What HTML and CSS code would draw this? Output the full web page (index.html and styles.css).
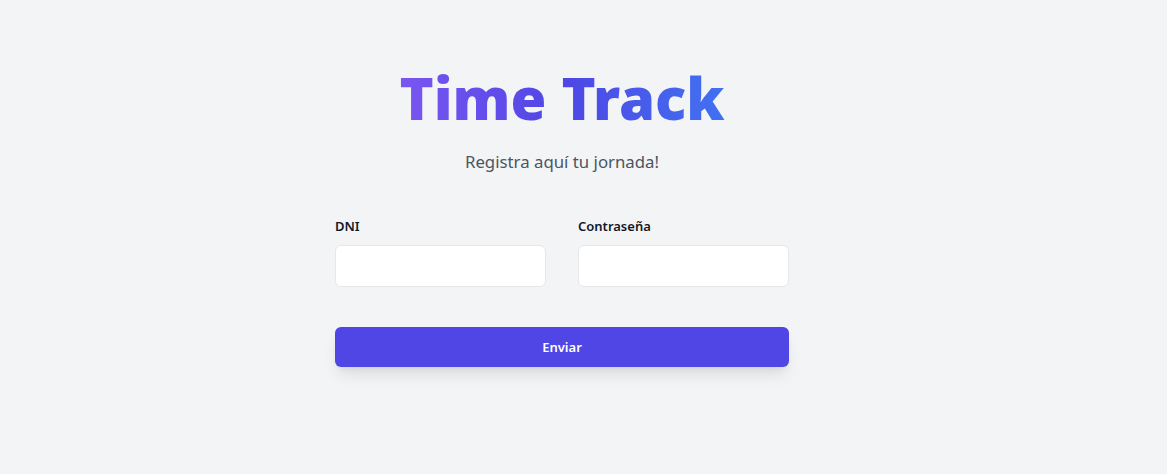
FILE: index.html
```html
<!DOCTYPE html>
<html lang="es">
<head>
<meta charset="utf-8">
<title>Time Track</title>
<link rel="stylesheet" href="styles.css">
</head>
<body>
<main class="page">
  <div class="card">
    <h1 class="title">Time Track</h1>
    <p class="subtitle">Registra aquí tu jornada!</p>
    <form class="form">
      <div class="fields">
        <div class="field">
          <label class="label" for="dni">DNI</label>
          <input class="input" id="dni" type="text">
        </div>
        <div class="field">
          <label class="label" for="pw">Contraseña</label>
          <input class="input" id="pw" type="password">
        </div>
      </div>
      <button class="button" type="button">Enviar</button>
    </form>
  </div>
</main>
</body>
</html>
```
FILE: styles.css
```css
html, body {
  margin: 0;
  padding: 0;
  background: #f3f4f6;
  font-family: "Noto Sans", "Open Sans", sans-serif;
}
.page {
  display: flex;
  justify-content: center;
  padding: 56px 43px 0 0;
  min-height: 474px;
  box-sizing: border-box;
}
.card {
  width: 454px;
  display: flex;
  flex-direction: column;
  align-items: stretch;
}
.title {
  margin: 0;
  text-align: center;
  font-size: 58px;
  line-height: 84px;
  font-weight: 900;
  background: linear-gradient(90deg, #8b5cf6 0%, #4f46e5 50%, #3b82f6 100%);
  -webkit-background-clip: text;
  background-clip: text;
  color: transparent;
}
.subtitle {
  margin: 8px 0 0;
  text-align: center;
  font-size: 16.8px;
  line-height: 28px;
  color: #4b5563;
}
.form {
  margin-top: 40px;
  display: flex;
  flex-direction: column;
  gap: 40px;
}
.fields {
  display: grid;
  grid-template-columns: 1fr 1fr;
  gap: 32px;
}
.field {
  display: flex;
  flex-direction: column;
  gap: 9px;
}
.label {
  font-size: 13px;
  line-height: 20px;
  font-weight: 600;
  color: #111827;
}
.input {
  height: 42px;
  box-sizing: border-box;
  border: 1px solid #e5e7eb;
  border-radius: 6px;
  background: #ffffff;
  padding: 8px 12px;
  font-size: 14px;
  outline: none;
}
.button {
  height: 40px;
  border: none;
  border-radius: 6px;
  background: #4f46e5;
  color: #ffffff;
  font-family: inherit;
  font-size: 13px;
  font-weight: 600;
  box-shadow: 0 10px 15px -3px rgba(0,0,0,0.1), 0 4px 6px -4px rgba(0,0,0,0.1);
  cursor: pointer;
}
```
